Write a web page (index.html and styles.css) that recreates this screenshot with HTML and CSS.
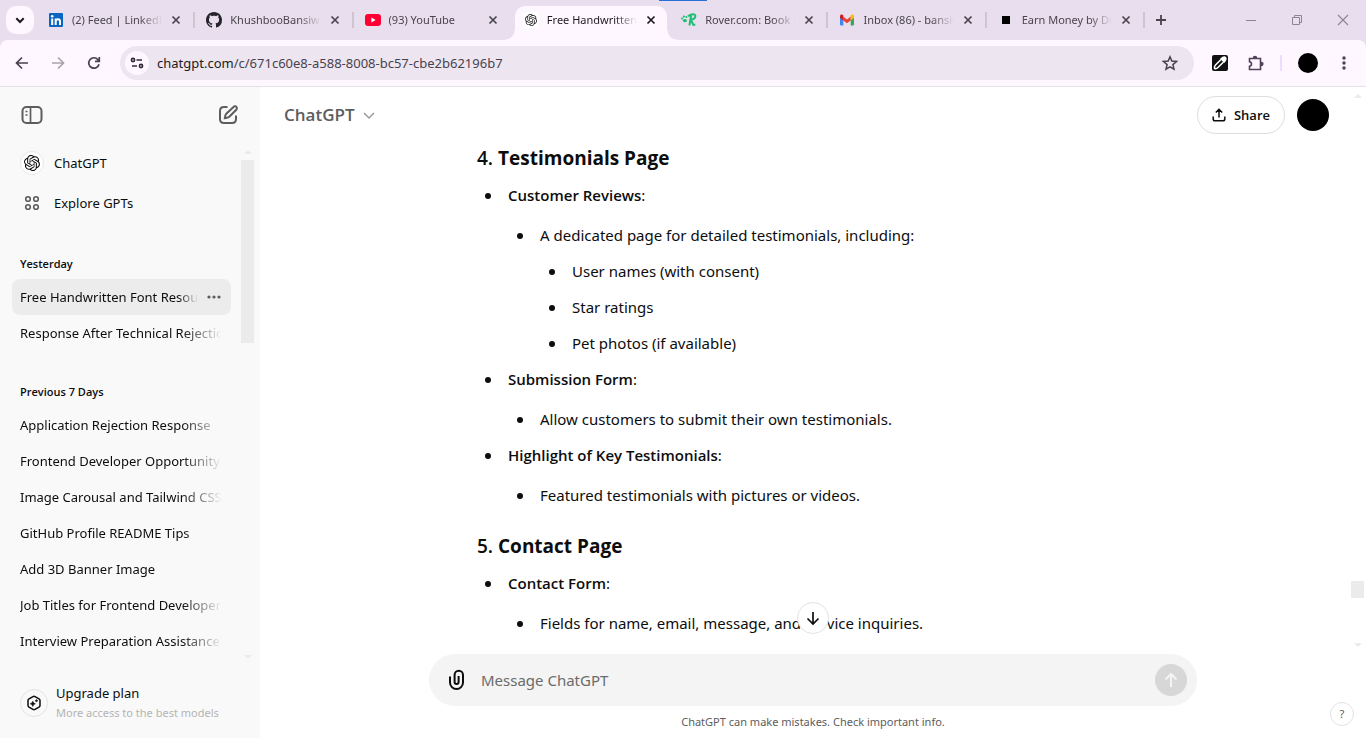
FILE: index.html
```html
<!DOCTYPE html>
<html lang="en">
<head>
<meta charset="utf-8">
<title>Free Handwritten Font Resources</title>
<link rel="stylesheet" href="styles.css">
</head>
<body>
<svg class="defs" aria-hidden="true">
  <symbol id="openai" viewBox="0 0 24 24"><path fill="currentColor" d="M22.2819 9.8211a5.9847 5.9847 0 0 0-.5157-4.9108 6.0462 6.0462 0 0 0-6.5098-2.9A6.0651 6.0651 0 0 0 4.9807 4.1818a5.9847 5.9847 0 0 0-3.9977 2.9 6.0462 6.0462 0 0 0 .7427 7.0966 5.98 5.98 0 0 0 .511 4.9107 6.051 6.051 0 0 0 6.5146 2.9001A5.9847 5.9847 0 0 0 13.2599 24a6.0557 6.0557 0 0 0 5.7718-4.2058 5.9894 5.9894 0 0 0 3.9977-2.9001 6.0557 6.0557 0 0 0-.7475-7.0729zm-9.022 12.6081a4.4755 4.4755 0 0 1-2.8764-1.0408l.1419-.0804 4.7783-2.7582a.7948.7948 0 0 0 .3927-.6813v-6.7369l2.02 1.1686a.071.071 0 0 1 .038.052v5.5826a4.504 4.504 0 0 1-4.4945 4.4944zm-9.6607-4.1254a4.4708 4.4708 0 0 1-.5346-3.0137l.142.0852 4.783 2.7582a.7712.7712 0 0 0 .7806 0l5.8428-3.3685v2.3324a.0804.0804 0 0 1-.0332.0615L9.74 19.9502a4.4992 4.4992 0 0 1-6.1408-1.6464zM2.3408 7.8956a4.485 4.485 0 0 1 2.3655-1.9728V11.6a.7664.7664 0 0 0 .3879.6765l5.8144 3.3543-2.0201 1.1685a.0757.0757 0 0 1-.071 0l-4.8303-2.7865A4.504 4.504 0 0 1 2.3408 7.872zm16.5963 3.8558L13.1038 8.364 15.1192 7.2a.0757.0757 0 0 1 .071 0l4.8303 2.7913a4.4944 4.4944 0 0 1-.6765 8.1042v-5.6772a.79.79 0 0 0-.407-.667zm2.0107-3.0231l-.142-.0852-4.7735-2.7818a.7759.7759 0 0 0-.7854 0L9.409 9.2297V6.8974a.0662.0662 0 0 1 .0284-.0615l4.8303-2.7866a4.4992 4.4992 0 0 1 6.6802 4.66zM8.3065 12.863l-2.02-1.1638a.0804.0804 0 0 1-.038-.0567V6.0742a4.4992 4.4992 0 0 1 7.3757-3.4537l-.142.0805L8.704 5.459a.7948.7948 0 0 0-.3927.6813zm1.0976-2.3654l2.602-1.4998 2.6069 1.4998v2.9994l-2.5974 1.4997-2.6067-1.4997Z"/></symbol>
  <symbol id="x" viewBox="0 0 16 16"><path d="M4.5 4.5l7 7m0-7l-7 7" stroke="currentColor" stroke-width="1.7" fill="none"/></symbol>
</svg>

<div class="window">
  <header class="tabstrip">
    <div class="loadbar"></div>
    <button class="tab-search" aria-label="Search tabs"><svg width="16" height="16" viewBox="0 0 16 16"><path d="M4.3 6.3L8 10l3.7-3.7" fill="none" stroke="#1d1b20" stroke-width="2"/></svg></button>
    <nav class="tabs" aria-label="Tabs">
      <div class="tab">
        <svg width="16" height="16" viewBox="0 0 16 16"><rect x="1" y="1" width="14" height="14" rx="1" fill="#0a66c2"/><circle cx="4.2" cy="4.3" r="1.3" fill="#fff"/><path d="M4.2 6.4V13M7.7 6.4V13M7.7 9.6c0-3 4.3-3 4.3 0V13" stroke="#fff" stroke-width="2" fill="none"/></svg>
        <span class="tab-title">(2) Feed | LinkedIn</span>
        <button class="tab-close" aria-label="Close tab"><svg width="16" height="16"><use href="#x"/></svg></button>
      </div>
      <div class="tab">
        <svg width="16" height="16" viewBox="0 0 16 16"><path fill="#24222a" d="M8 0C3.58 0 0 3.58 0 8c0 3.54 2.29 6.53 5.47 7.59.4.07.55-.17.55-.38 0-.19-.01-.82-.01-1.49-2.01.37-2.53-.49-2.69-.94-.09-.23-.48-.94-.82-1.13-.28-.15-.68-.52-.01-.53.63-.01 1.08.58 1.23.82.72 1.21 1.87.87 2.33.66.07-.52.28-.87.51-1.07-1.78-.2-3.64-.89-3.64-3.95 0-.87.31-1.59.82-2.15-.08-.2-.36-1.02.08-2.12 0 0 .67-.21 2.2.82.64-.18 1.32-.27 2-.27.68 0 1.36.09 2 .27 1.53-1.04 2.2-.82 2.2-.82.44 1.1.16 1.92.08 2.12.51.56.82 1.27.82 2.15 0 3.07-1.87 3.75-3.65 3.95.29.25.54.73.54 1.48 0 1.07-.01 1.93-.01 2.2 0 .21.15.46.55.38A8.013 8.013 0 0016 8c0-4.42-3.58-8-8-8z"/></svg>
        <span class="tab-title">KhushbooBansiwal</span>
        <button class="tab-close" aria-label="Close tab"><svg width="16" height="16"><use href="#x"/></svg></button>
      </div>
      <div class="tab no-sep">
        <svg width="16" height="16" viewBox="0 0 16 16"><rect y="2" width="16" height="12" rx="3" fill="#ff0033"/><path d="M6.4 5.6v4.8L10.6 8z" fill="#fff"/></svg>
        <span class="tab-title">(93) YouTube</span>
        <button class="tab-close" aria-label="Close tab"><svg width="16" height="16"><use href="#x"/></svg></button>
      </div>
      <div class="tab active">
        <span class="favicon-tile"><svg width="12" height="12"><use href="#openai"/></svg></span>
        <span class="tab-title">Free Handwritten Font</span>
        <button class="tab-close" aria-label="Close tab"><svg width="16" height="16"><use href="#x"/></svg></button>
      </div>
      <div class="tab">
        <svg width="16" height="16" viewBox="0 0 16 16" fill="#1cbf73"><ellipse cx="3.9" cy="8.6" rx="2.1" ry="1.7"/><circle cx="1" cy="6.6" r="1"/><circle cx="2.9" cy="4.6" r="1.1"/><circle cx="5.4" cy="4.9" r="1"/><path d="M10.200 3L8.400 13.500M7 4.400C9.400 1.500 15 1.200 14.300 4.700 13.900 7 11.500 7.600 10 7.700L12.300 12.800h2" fill="none" stroke="#1cbf73" stroke-width="2"/></svg>
        <span class="tab-title">Rover.com: Book Pet</span>
        <button class="tab-close" aria-label="Close tab"><svg width="16" height="16"><use href="#x"/></svg></button>
      </div>
      <div class="tab">
        <svg width="16" height="16" viewBox="0 0 16 16"><path d="M1 4v8.500q0 1 1 1h2.300V6.500z" fill="#4285f4"/><path d="M15 4v8.500q0 1-1 1h-2.300V6.500z" fill="#34a853"/><path d="M4.300 4.500L8 7.400l3.700-2.900v4L8 11.300 4.300 8.500z" fill="#ea4335"/><path d="M1 4.200C1 2.300 3 2 4.300 3.200v5.300L1 6z" fill="#c5221f"/><path d="M15 4.200c0-1.900-2-2.200-3.300-1v5.300L15 6z" fill="#fbbc04"/></svg>
        <span class="tab-title">Inbox (86) - bansiwal</span>
        <button class="tab-close" aria-label="Close tab"><svg width="16" height="16"><use href="#x"/></svg></button>
      </div>
      <div class="tab">
        <svg width="16" height="16"><rect x="4" y="4" width="8" height="8"/></svg>
        <span class="tab-title">Earn Money by Doing</span>
        <button class="tab-close" aria-label="Close tab"><svg width="16" height="16"><use href="#x"/></svg></button>
      </div>
    </nav>
    <button class="new-tab" aria-label="New tab"><svg width="16" height="16"><path d="M8 3v10M3 8h10" stroke="#48454e" stroke-width="1.800"/></svg></button>
    <div class="window-controls">
      <button aria-label="Minimize"><svg width="16" height="16"><path d="M3 8.500h10" stroke="#8b8690"/></svg></button>
      <button aria-label="Restore"><svg width="16" height="16" fill="none" stroke="#8b8690"><path d="M3.500 5.500h7v7h-7zM5.500 5.500v-2h7v7h-2"/></svg></button>
      <button aria-label="Close"><svg width="16" height="16"><path d="M3 3l10 10M13 3L3 13" stroke="#8b8690" stroke-width="1.200"/></svg></button>
    </div>
  </header>

  <div class="toolbar">
    <button aria-label="Back"><svg width="16" height="16" fill="none" stroke="#48424f" stroke-width="1.700"><path d="M14 8H3M8 2.500L2.500 8 8 13.500"/></svg></button>
    <button aria-label="Forward"><svg width="16" height="16" fill="none" stroke="#a9a4ad" stroke-width="1.700"><path d="M2 8h11M8 2.500L13.500 8 8 13.500"/></svg></button>
    <button aria-label="Reload"><svg width="16" height="16" fill="none" stroke="#48424f" stroke-width="1.700"><path d="M13 9.200A5.200 5.200 0 1 1 12 4.700L13 6M13.300 2v4.300H9"/></svg></button>
    <div class="omnibox">
      <button class="site-info" aria-label="Site information"><svg width="16" height="16" fill="none" stroke="#302c36" stroke-width="1.600"><circle cx="4" cy="5" r="1.600"/><path d="M7.500 5H13M3 11h5"/><circle cx="12" cy="11" r="1.600"/></svg></button>
      <a class="url" href="#"><span>chatgpt.com</span>/c/671c60e8-a588-8008-bc57-cbe2b62196b7</a>
      <button class="star" aria-label="Bookmark"><svg width="16" height="16" fill="none" stroke="#48424f" stroke-width="1.500"><path d="M8 1.800l1.800 4.300 4.700.4-3.600 3.100 1.100 4.600L8 11.800l-4 2.400 1.100-4.600-3.600-3.100 4.700-.4z"/></svg></button>
    </div>
    <div class="toolbar-end">
      <button class="picker" aria-label="Color picker"><svg width="16" height="16"><rect width="16" height="16" rx="2" fill="#111"/><path d="M9 4.500L3.500 10q-1.500 1.500-1 3.500 2 .5 3.500-1L11.500 7" fill="none" stroke="#fff" stroke-width="1.500"/><path d="M8 3.800Q12 0 14 2t-1.800 6z" fill="#fff"/></svg></button>
      <button aria-label="Extensions"><svg width="16" height="17" viewBox="0 0 16 17" fill="none" stroke="#4f4358" stroke-width="1.600"><path d="M1.500 3.500h11v11h-11v-3.300q2-.3 2-2.200t-2-2.200z"/><path d="M5.500 3Q5.500 1.500 7 1.500T8.500 3zM13 7.500q1.800 0 1.800 1.500T13 10.500z" fill="#4f4358"/></svg></button>
      <span class="divider"></span>
      <button class="profile" aria-label="Profile"></button>
      <button aria-label="Menu"><svg width="16" height="16" fill="#48424f"><circle cx="8" cy="3" r="1.700"/><circle cx="8" cy="8" r="1.700"/><circle cx="8" cy="13" r="1.700"/></svg></button>
    </div>
  </div>

  <div class="app">
    <aside class="sidebar">
      <div class="side-head">
        <button aria-label="Close sidebar"><svg width="24" height="24" fill="none" stroke="#5d5d5d" stroke-width="2"><rect x="2.500" y="4" width="19" height="16" rx="4"/><path d="M10.500 4v16M5.500 8.500h2M5.500 12h2" stroke-width="1.700"/></svg></button>
        <button aria-label="New chat"><svg width="24" height="24" fill="none" stroke="#5d5d5d" stroke-width="2"><path d="M11.500 4H8Q4 4 4 8v8q0 4 4 4h8q4 0 4-4v-3.500"/><path d="M18 3.500q1.600-.8 2.500.5t0 2.500l-7.200 7.200q-1.300 1.100-4.500 1.500.4-3.200 1.500-4.500z"/></svg></button>
      </div>
      <div class="side-body">
        <nav class="side-list">
          <a class="side-link" href="#"><span class="gpt-badge"><svg width="16" height="16"><use href="#openai"/></svg></span>ChatGPT</a>
          <a class="side-link" href="#"><span class="side-icon"><svg width="16" height="16" fill="none" stroke="#5d5d5d" stroke-width="1.600"><circle cx="4" cy="4" r="2.300"/><circle cx="12" cy="4" r="2.300"/><circle cx="4" cy="12" r="2.300"/><circle cx="12" cy="12" r="2.300"/></svg></span>Explore GPTs</a>
          <h2>Yesterday</h2>
          <div class="chat current"><a href="#">Free Handwritten Font Resources</a><button aria-label="Options"><svg width="16" height="16" fill="#5d5d5d"><circle cx="3" cy="8" r="1.600"/><circle cx="8" cy="8" r="1.600"/><circle cx="13" cy="8" r="1.600"/></svg></button></div>
          <div class="chat"><a href="#">Response After Technical Rejection</a></div>
          <h2>Previous 7 Days</h2>
          <div class="chat"><a href="#">Application Rejection Response</a></div>
          <div class="chat"><a href="#">Frontend Developer Opportunity</a></div>
          <div class="chat"><a href="#">Image Carousal and Tailwind CSS</a></div>
          <div class="chat"><a href="#">GitHub Profile README Tips</a></div>
          <div class="chat"><a href="#">Add 3D Banner Image</a></div>
          <div class="chat"><a href="#">Job Titles for Frontend Developers</a></div>
          <div class="chat"><a href="#">Interview Preparation Assistance</a></div>
        </nav>
        <div class="scrollbar"><i class="arrow up"></i><i class="thumb"></i><i class="arrow down"></i></div>
      </div>
      <a class="upgrade" href="#">
        <span class="upgrade-icon"><svg width="16" height="16" fill="none" stroke="#0d0d0d" stroke-width="1.500"><path d="M7 1.600q1-.6 2 0l4 2.300q1 .6 1 1.700v4.800q0 1.100-1 1.700l-4 2.300q-1 .6-2 0l-4-2.300q-1-.6-1-1.700V5.600q0-1.100 1-1.700z"/><path d="M6.800 6.200q.4 2.200 2.600 2.600-2.200.4-2.600 2.600-.4-2.200-2.600-2.600 2.200-.4 2.600-2.600zM10.500 4.500q.2 1.100 1.300 1.300-1.100.2-1.300 1.300-.2-1.100-1.300-1.300 1.100-.2 1.300-1.300z" fill="#0d0d0d" stroke-width=".6"/></svg></span>
        <span class="upgrade-text">Upgrade plan<small>More access to the best models</small></span>
      </a>
    </aside>

    <main class="main">
      <div class="main-head">
        <button class="model">ChatGPT<svg width="14" height="14" fill="none" stroke="#9b9b9b" stroke-width="1.500"><path d="M2 5l5 5 5-5"/></svg></button>
        <button class="share"><svg width="14" height="14" fill="none" stroke="#0d0d0d" stroke-width="1.500"><path d="M7 9.500V1.500M3.800 4.500L7 1.300l3.200 3.200M1.200 8.500V11q0 1.800 1.800 1.800h8q1.800 0 1.800-1.800V8.500"/></svg>Share</button>
        <button class="avatar" aria-label="Account"></button>
      </div>
      <div class="thread-wrap">
        <div class="thread">
          <article class="message">
            <h3>4. <strong>Testimonials Page</strong></h3>
            <ul>
              <li><strong>Customer Reviews</strong>:
                <ul>
                  <li>A dedicated page for detailed testimonials, including:
                    <ul><li>User names (with consent)</li><li>Star ratings</li><li>Pet photos (if available)</li></ul>
                  </li>
                </ul>
              </li>
              <li><strong>Submission Form</strong>:
                <ul><li>Allow customers to submit their own testimonials.</li></ul>
              </li>
              <li><strong>Highlight of Key Testimonials</strong>:
                <ul><li>Featured testimonials with pictures or videos.</li></ul>
              </li>
            </ul>
            <h3>5. <strong>Contact Page</strong></h3>
            <ul>
              <li><strong>Contact Form</strong>:
                <ul><li>Fields for name, email, message, and service inquiries.</li></ul>
              </li>
              <li><strong>Interactive Map</strong>:</li>
            </ul>
          </article>
        </div>
        <div class="scrollbar page"><i class="arrow up"></i><i class="thumb"></i><i class="arrow down"></i></div>
        <button class="to-bottom" aria-label="Scroll to bottom"><svg width="18" height="18" fill="none" stroke="#0d0d0d" stroke-width="1.700"><path d="M9 3v12M3.500 9.500L9 15l5.500-5.500"/></svg></button>
      </div>
      <form class="composer">
        <button type="button" aria-label="Attach file"><svg width="24" height="24" fill="none" stroke="#0d0d0d" stroke-width="2"><path d="M5 8.500V14.500a6.500 6.500 0 0 0 13 0V7a4.200 4.200 0 0 0-8.400 0V14a2 2 0 0 0 4 0V8"/></svg></button>
        <input type="text" placeholder="Message ChatGPT" aria-label="Message ChatGPT">
        <button type="button" class="send" aria-label="Send"><svg width="18" height="18" fill="none" stroke="#f4f4f4" stroke-width="2"><path d="M9 16V3M3.500 8.500L9 3l5.500 5.500"/></svg></button>
      </form>
      <p class="note">ChatGPT can make mistakes. Check important info.</p>
      <button class="help" aria-label="Help">?</button>
    </main>
  </div>
</div>
</body>
</html>
```

FILE: styles.css
```css
* { box-sizing: border-box; }
body { margin: 0; font: 14px/20px "Noto Sans", "Open Sans", sans-serif; color: #0d0d0d; background: #fff; }
button { padding: 0; border: 0; background: none; font: inherit; color: inherit; display: grid; place-items: center; flex: none; }
a { color: inherit; text-decoration: none; }
svg { display: block; flex: none; }
ul, h2, h3, p { margin: 0; padding: 0; }
h2, h3, strong, .share, .model { font-family: "Open Sans", "Noto Sans", sans-serif; }
.defs { position: absolute; width: 0; height: 0; }
.window { display: flex; flex-direction: column; height: 100vh; overflow: hidden; background: #e9deed; }

/* Browser tabs */
.tabstrip { position: relative; display: flex; height: 40px; background: #e9deed; color: #48454e; font-size: 12px; }
.loadbar { position: absolute; top: 0; left: 659px; width: 48px; height: 1px; background: #2a6fd6; }
.tab-search { width: 28px; height: 28px; margin: 6px 3px 0 6px; border-radius: 10px; background: #fef7ff; }
.tabs { display: flex; flex: 0 1 1108px; min-width: 0; }
.tab { position: relative; flex: 1; min-width: 0; display: flex; align-items: center; gap: 8px; padding: 0 11px; }
.tab::after { content: ""; position: absolute; right: 0; top: 12px; width: 2px; height: 16px; background: #cdc6d0; }
.no-sep::after { display: none; }
.tab-title { flex: 1; margin-right: -2px; font-size: 11px; overflow: hidden; white-space: nowrap; -webkit-mask-image: linear-gradient(to right, #000 75%, transparent); mask-image: linear-gradient(to right, #000 75%, transparent); }
.tab.active { margin: 6px 0 0; padding-bottom: 6px; color: #1d1b20; }
.tab.active::before { content: ""; position: absolute; inset: 0 3px; border-radius: 10px 10px 0 0; background: #fef7ff; }
.tab.active::after { top: auto; bottom: 0; left: -7px; right: -7px; width: auto; height: 10px; background: radial-gradient(circle at 0 0, transparent 9px, #fef7ff 10px) left / 10px 10px no-repeat, radial-gradient(circle at 100% 0, transparent 9px, #fef7ff 10px) right / 10px 10px no-repeat; }
.tab.active > * { position: relative; }
.favicon-tile { width: 16px; height: 16px; display: grid; place-items: center; border-radius: 3px; background: #fff; }
.new-tab { width: 32px; }
.window-controls { display: flex; margin-left: auto; }
.window-controls button { width: 46px; }

/* Address bar */
.toolbar { display: flex; align-items: center; height: 47px; flex: none; padding: 0 10px 0 4px; border-bottom: 1px solid #e7e0e8; border-radius: 8px 8px 0 0; background: #fef7ff; color: #48424f; }
.toolbar > button { width: 36px; height: 36px; }
.omnibox { display: flex; align-items: center; flex: 1; height: 34px; margin: 0 8px; padding: 0 16px 0 5px; border-radius: 17px; background: #ede6f0; }
.site-info { width: 24px; height: 24px; border-radius: 50%; background: #fef7ff; }
.url { flex: 1; margin-left: 8px; font-size: 13px; }
.url span { color: #1d1b20; }
.toolbar-end { display: flex; align-items: center; gap: 16px; padding: 0 4px 0 10px; }
.picker { margin-right: 4px; }
.divider { width: 2px; height: 16px; background: #eaddff; }
.profile { width: 20px; height: 20px; margin-right: 2px; border-radius: 50%; background: #000; }

/* Sidebar */
.app { display: flex; flex: 1; min-height: 0; background: #fff; }
.sidebar { display: flex; flex-direction: column; flex: 0 0 260px; min-width: 0; background: #f9f9f9; font-size: 13px; }
.side-head { display: flex; justify-content: space-between; align-items: center; height: 56px; padding: 0 20px; flex: none; }
.side-body { display: flex; flex: 1; min-height: 0; }
.side-list { flex: 1; min-width: 0; padding-left: 12px; overflow: hidden; }
.side-link { display: flex; align-items: center; gap: 10px; height: 40px; padding-left: 8px; }
.gpt-badge, .side-icon { width: 24px; height: 24px; display: grid; place-items: center; border-radius: 50%; }
.gpt-badge { border: 1px solid #e8e8e8; background: #fff; }
.side-list h2 { padding: 31px 8px 5px; font-size: 11px; line-height: 20px; font-weight: 600; }
.chat { display: flex; align-items: center; gap: 8px; height: 36px; padding: 0 9px 0 8px; border-radius: 8px; }
.chat a { flex: 1; min-width: 0; overflow: hidden; white-space: nowrap; -webkit-mask-image: linear-gradient(to right, #000 calc(100% - 40px), transparent); mask-image: linear-gradient(to right, #000 calc(100% - 40px), transparent); }
.current { background: #ececec; }
.current a { -webkit-mask-image: linear-gradient(to right, #000 calc(100% - 20px), transparent); mask-image: linear-gradient(to right, #000 calc(100% - 20px), transparent); }
.scrollbar { display: flex; flex-direction: column; align-items: center; width: 13px; margin: 7px 6px 0 10px; flex: none; }
.thumb { width: 13px; height: 183px; margin: 6px 0 auto; background: #ebebeb; }
.arrow { border: 4px solid transparent; border-top: 0; border-bottom-color: #ebebeb; }
.arrow.down { border-top: 4px solid #ebebeb; border-bottom: 0; }
.upgrade { display: flex; align-items: center; gap: 8px; height: 79px; padding: 8px 20px 0; flex: none; }
.upgrade-icon { width: 28px; height: 28px; display: grid; place-items: center; border: 1px solid #e3e3e3; border-radius: 50%; }
.upgrade-text { display: flex; flex-direction: column; line-height: 19px; white-space: nowrap; }
.upgrade-text small { font-size: 11px; color: #b4b4b4; }

/* Conversation */
.main { position: relative; display: flex; flex-direction: column; flex: 1; min-width: 0; }
.main-head { display: flex; align-items: center; gap: 12px; height: 56px; flex: none; padding: 0 37px 0 24px; }
.model { display: flex; align-items: center; gap: 7px; margin-right: auto; font-size: 17px; font-weight: 600; color: #5d5d5d; }
.share { display: flex; align-items: center; justify-content: center; gap: 8px; width: 88px; height: 38px; border: 1px solid #dedede; border-radius: 19px; font-size: 13px; font-weight: 600; }
.avatar { width: 32px; height: 32px; border-radius: 50%; background: #000; }
.thread-wrap { position: relative; flex: 1; min-height: 0; }
.thread { height: 100%; overflow: hidden; }
.message { max-width: 768px; margin: 0 auto; padding: 1px 48px 0; font-size: 15px; line-height: 28px; }
.message strong { font-weight: 600; }
.message h3 { margin-bottom: 9px; font-size: 19px; font-weight: 600; line-height: 28px; }
.message h3 strong { font-weight: 700; }
.message ul + h3 { margin-top: 23px; }
.message ul { list-style: none; }
.message > ul { padding-left: 31px; }
.message ul ul { margin-top: 12px; padding-left: 32px; }
.message ul ul ul { margin-top: 8px; }
.message li + li { margin-top: 8px; }
.message li::before { content: ""; display: inline-block; width: 6px; height: 6px; margin: 0 17px 0 -23px; border-radius: 50%; background: #0d0d0d; vertical-align: 2px; }
.scrollbar.page { position: absolute; top: -49px; right: 2px; bottom: 7px; margin: 0; }
.scrollbar.page .thumb { height: 17px; margin: auto 0 45px; }
.to-bottom { position: absolute; left: calc(50% - 16px); bottom: 20px; width: 32px; height: 32px; border: 1px solid #e3e3e3; border-radius: 50%; background: #fff; }
.composer { display: flex; align-items: center; gap: 12px; width: 768px; max-width: 100%; height: 52px; margin: 0 auto; padding: 0 10px 0 16px; border-radius: 26px; background: #f4f4f4; flex: none; }
.composer input { flex: 1; min-width: 0; padding: 0; border: 0; outline: 0; background: none; font: inherit; font-size: 15px; }
.composer input::placeholder { color: #6b6b6b; opacity: 1; }
.send { width: 32px; height: 32px; border-radius: 50%; background: #d7d7d7; }
.note { height: 32px; flex: none; font-size: 11px; line-height: 32px; text-align: center; color: #5d5d5d; }
.help { position: absolute; right: 12px; bottom: 12px; width: 24px; height: 24px; border: 1px solid #e3e3e3; border-radius: 50%; font-size: 11px; color: #5d5d5d; background: #fff; }
```
